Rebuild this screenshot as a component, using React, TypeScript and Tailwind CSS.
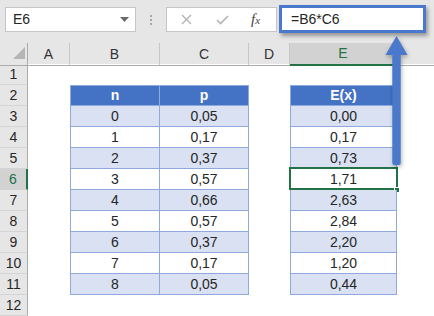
import React from "react";

const font = { fontFamily: '"Liberation Sans", Arial, sans-serif' };

const rows: { n: string; p: string; e: string }[] = [
  { n: "0", p: "0,05", e: "0,00" },
  { n: "1", p: "0,17", e: "0,17" },
  { n: "2", p: "0,37", e: "0,73" },
  { n: "3", p: "0,57", e: "1,71" },
  { n: "4", p: "0,66", e: "2,63" },
  { n: "5", p: "0,57", e: "2,84" },
  { n: "6", p: "0,37", e: "2,20" },
  { n: "7", p: "0,17", e: "1,20" },
  { n: "8", p: "0,05", e: "0,44" },
];

const grid = "grid grid-cols-[28px_42px_90px_89px_41px_107px_1fr]";

function RowHeader({ label, selected }: { label: string; selected?: boolean }) {
  return selected ? (
    <div className="h-[21px] flex items-center justify-center bg-[#d2d2d2] border-b border-[#d4d4d4] border-r-2 border-r-[#217346] text-[#217346] text-[14px]">
      {label}
    </div>
  ) : (
    <div className="h-[21px] flex items-center justify-center bg-[#e6e6e6] border-b border-[#d4d4d4] border-r border-r-[#ababab] text-[#262626] text-[14px]">
      {label}
    </div>
  );
}

function Empty() {
  return <div className="h-[21px]" />;
}

export default function App() {
  return (
    <div className="relative w-[434px] h-[316px] overflow-hidden bg-white" style={font}>
      {/* toolbar */}
      <div className="h-[43px] bg-[#e6e6e6] flex items-start">
        <div className="mt-[7px] ml-[5px] w-[131px] h-[25px] bg-white border border-[#c6c6c6] flex items-center justify-between pl-[7px] pr-[6px]">
          <span className="text-[14px] text-[#262626]">E6</span>
          <svg width="9" height="5" viewBox="0 0 9 5">
            <path d="M0 0 L9 0 L4.5 5 Z" fill="#6b6b6b" />
          </svg>
        </div>
        <div className="mt-[15px] ml-[14px] flex flex-col gap-[2px]">
          <div className="w-[2px] h-[2px] bg-[#a6a6a6]" />
          <div className="w-[2px] h-[2px] bg-[#a6a6a6]" />
          <div className="w-[2px] h-[2px] bg-[#a6a6a6]" />
        </div>
        <div className="mt-[7px] ml-[14px] w-[111px] h-[25px] bg-white border border-[#c6c6c6] flex items-center">
          <svg className="ml-[14px]" width="11" height="11" viewBox="0 0 11 11">
            <path d="M1 1 L10 10 M10 1 L1 10" stroke="#b3b3b3" strokeWidth="1.4" />
          </svg>
          <svg className="ml-[24px]" width="13" height="10" viewBox="0 0 13 10">
            <path d="M1 5 L4.5 8.5 L12 1" stroke="#b3b3b3" strokeWidth="1.6" fill="none" />
          </svg>
          <span
            className="ml-[22px] text-[15px] italic text-[#444]"
            style={{ fontFamily: '"Liberation Serif", "Times New Roman", serif' }}
          >
            f<span className="text-[11px]">x</span>
          </span>
        </div>
        <div className="mt-[5px] ml-[2px] w-[147px] h-[28px] bg-white border-[3px] border-[#4a78cb] shadow-[2px_3px_4px_rgba(0,0,0,0.35)] flex items-center pl-[9px]">
          <span className="text-[14px] text-[#262626]">=B6*C6</span>
        </div>
      </div>

      {/* column headers */}
      <div className={`${grid} h-[21px] bg-[#e6e6e6] text-[14px] text-[#333]`}>
        <div className="relative border-r border-b border-[#ababab]">
          <svg className="absolute left-[13px] top-[4px]" width="12" height="12" viewBox="0 0 12 12">
            <path d="M12 0 L12 12 L0 12 Z" fill="#b5b5b5" />
          </svg>
        </div>
        <div className="flex items-center justify-center border-r border-r-[#c6c6c6] border-b border-b-[#ababab]">A</div>
        <div className="flex items-center justify-center border-r border-r-[#c6c6c6] border-b border-b-[#ababab]">B</div>
        <div className="flex items-center justify-center border-r border-r-[#c6c6c6] border-b border-b-[#ababab]">C</div>
        <div className="flex items-center justify-center border-r border-r-[#c6c6c6] border-b border-b-[#ababab]">D</div>
        <div className="flex items-center justify-center bg-[#d2d2d2] border-r border-r-[#c6c6c6] border-b-2 border-b-[#217346] text-[#217346]">E</div>
        <div className="border-b border-b-[#ababab]" />
      </div>

      {/* row 1 */}
      <div className={grid}>
        <RowHeader label="1" />
        <Empty />
        <Empty />
        <Empty />
        <Empty />
        <Empty />
        <Empty />
      </div>

      {/* row 2: table headers */}
      <div className={`${grid} text-[14px]`}>
        <RowHeader label="2" />
        <Empty />
        <div className="h-[21px] bg-[#4472c4] border border-[#8ea9db] flex items-center justify-center font-bold text-white">n</div>
        <div className="h-[21px] bg-[#4472c4] border-t border-r border-b border-[#8ea9db] flex items-center justify-center font-bold text-white">p</div>
        <Empty />
        <div className="h-[21px] bg-[#4472c4] border border-[#8ea9db] flex items-center justify-center font-bold text-white">E(x)</div>
        <Empty />
      </div>

      {rows.map((r, i) => {
        const shaded = i % 2 === 0;
        const bg = shaded ? "bg-[#d9e1f2]" : "bg-white";
        const selected = i === 3;
        return (
          <div key={i} className={`${grid} text-[14px] text-[#262626]`}>
            <RowHeader label={String(i + 3)} selected={selected} />
            <Empty />
            <div className={`h-[21px] ${bg} border-l border-r border-b border-[#8ea9db] flex items-center justify-center`}>{r.n}</div>
            <div className={`h-[21px] ${bg} border-r border-b border-[#8ea9db] flex items-center justify-center`}>{r.p}</div>
            <Empty />
            <div className={`relative h-[21px] ${bg} border-l border-r border-b border-[#8ea9db] flex items-center justify-center`}>
              {r.e}
              {selected && (
                <>
                  <div className="absolute left-[-2px] top-[-2px] right-[-2px] bottom-[-1px] border-2 border-[#217346]" />
                  <div className="absolute right-[-4px] bottom-[-4px] w-[6px] h-[6px] bg-[#217346] border border-white" />
                </>
              )}
            </div>
            <Empty />
          </div>
        );
      })}

      {/* row 12 */}
      <div className={grid}>
        <RowHeader label="12" />
        <Empty />
        <Empty />
        <Empty />
        <Empty />
        <Empty />
        <Empty />
      </div>

      {/* annotation arrow */}
      <svg
        className="absolute left-[384px] top-[34px] drop-shadow-[1px_2px_2px_rgba(0,0,0,0.3)]"
        width="26"
        height="135"
        viewBox="0 0 26 135"
      >
        <path d="M12.5 2 L23.5 21 L1.5 21 Z" fill="#4a78cb" />
        <rect x="8.3" y="20" width="8.4" height="111" rx="2" fill="#4a78cb" />
      </svg>
    </div>
  );
}
